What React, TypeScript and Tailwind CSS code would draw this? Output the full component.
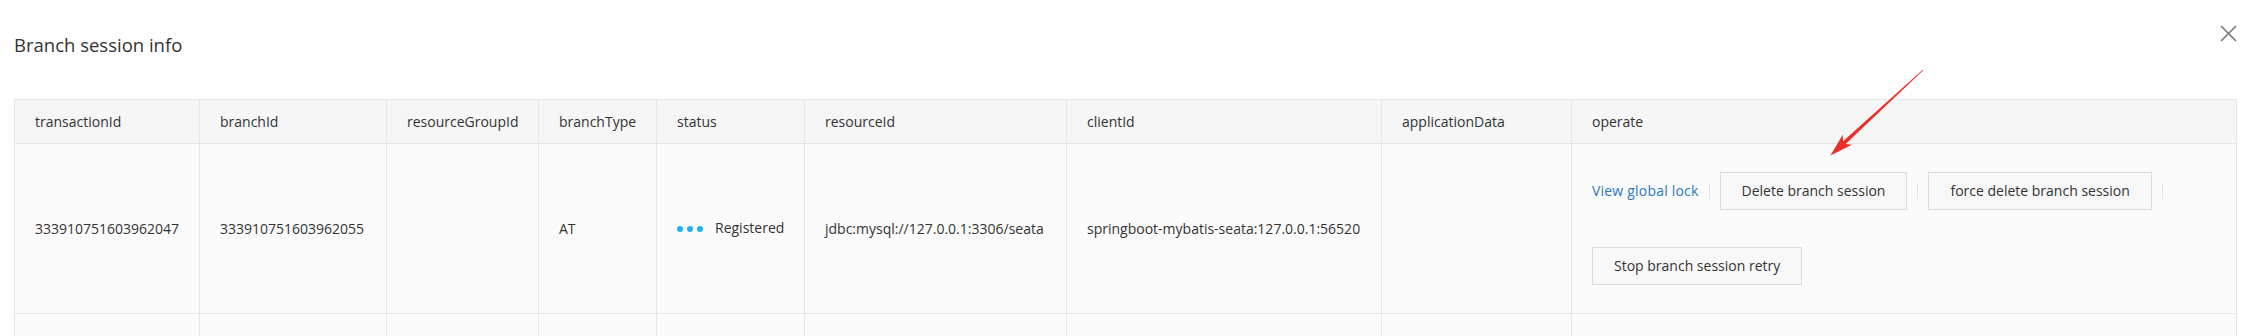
const COLUMNS = [
  { title: 'transactionId', width: 'w-[185px]' },
  { title: 'branchId', width: 'w-[187px]' },
  { title: 'resourceGroupId', width: 'w-[152px]' },
  { title: 'branchType', width: 'w-[118px]' },
  { title: 'status', width: 'w-[148px]' },
  { title: 'resourceId', width: 'w-[262px]' },
  { title: 'clientId', width: 'w-[315px]' },
  { title: 'applicationData', width: 'w-[190px]' },
  { title: 'operate', width: '' },
]

const ROW = {
  transactionId: '333910751603962047',
  branchId: '333910751603962055',
  resourceGroupId: '',
  branchType: 'AT',
  status: 'Registered',
  resourceId: 'jdbc:mysql://127.0.0.1:3306/seata',
  clientId: 'springboot-mybatis-seata:127.0.0.1:56520',
  applicationData: '',
}

function Divider() {
  return <span className="w-px h-[15px] bg-[#e3e3e3]" />
}

function ActionButton({ label }: { label: string }) {
  return (
    <button className="h-[38px] px-[21px] border border-[#dcdcdc] bg-[#f8f8f8] text-[14px] leading-[20px] text-[#333]">
      {label}
    </button>
  )
}

function CloseIcon() {
  return (
    <svg width="17" height="17" viewBox="0 0 17 17" className="shrink-0">
      <path d="M1 1 L16 16 M16 1 L1 16" stroke="#7a7a7a" strokeWidth="1.7" fill="none" />
    </svg>
  )
}

// red annotation arrow drawn over the screenshot
function Arrow() {
  return (
    <svg width="2260" height="336" className="absolute left-0 top-0 pointer-events-none">
      <g transform="translate(1923 70) rotate(137.3)">
        <polygon
          points="0,-0.4 107,-1.9 103,-6.8 126,0 103,6.8 107,1.9 0,0.4"
          fill="#ec2f26"
        />
      </g>
    </svg>
  )
}

export default function App() {
  const cell = 'border border-[#e6e6e6] px-[20px] text-left align-middle font-normal'

  return (
    <div className="relative min-h-[336px] bg-white pt-[25px] pl-[14px] pr-[23px] font-['Open_Sans',sans-serif] text-[#333]">
      <div className="flex items-start justify-between">
        <h2 className="mt-[8px] text-[18.5px] leading-[24px] font-normal text-[#333]">Branch session info</h2>
        <CloseIcon />
      </div>

      <table className="mt-[42px] w-full table-fixed border-collapse text-[14px] leading-[20px]">
        <colgroup>
          {COLUMNS.map((c) => (
            <col key={c.title} className={c.width} />
          ))}
        </colgroup>
        <thead>
          <tr className="h-[44px] bg-[#f6f6f6]">
            {COLUMNS.map((c) => (
              <th key={c.title} className={cell}>
                {c.title}
              </th>
            ))}
          </tr>
        </thead>
        <tbody className="bg-[#fbfbfb]">
          <tr>
            <td className={cell}>{ROW.transactionId}</td>
            <td className={cell}>{ROW.branchId}</td>
            <td className={cell}>{ROW.resourceGroupId}</td>
            <td className={cell}>{ROW.branchType}</td>
            <td className={cell}>
              <div className="flex items-center">
                <span className="flex gap-[4px]">
                  <span className="w-[6px] h-[6px] rounded-full bg-[#1db2ef]" />
                  <span className="w-[6px] h-[6px] rounded-full bg-[#1db2ef]" />
                  <span className="w-[6px] h-[6px] rounded-full bg-[#1db2ef]" />
                </span>
                <span className="ml-[12px] -mt-[2px]">{ROW.status}</span>
              </div>
            </td>
            <td className={cell}>{ROW.resourceId}</td>
            <td className={cell}>{ROW.clientId}</td>
            <td className={cell}>{ROW.applicationData}</td>
            <td className={cell + ' py-[28px]'}>
              <div className="flex flex-wrap items-center gap-x-[10px] gap-y-[37px]">
                <a className="text-[#2a78c0] tracking-[0.2px] cursor-pointer">View global lock</a>
                <Divider />
                <ActionButton label="Delete branch session" />
                <Divider />
                <ActionButton label="force delete branch session" />
                <Divider />
                <ActionButton label="Stop branch session retry" />
              </div>
            </td>
          </tr>
          <tr className="h-[60px]">
            {COLUMNS.map((c) => (
              <td key={c.title} className={cell} />
            ))}
          </tr>
        </tbody>
      </table>

      <Arrow />
    </div>
  )
}
